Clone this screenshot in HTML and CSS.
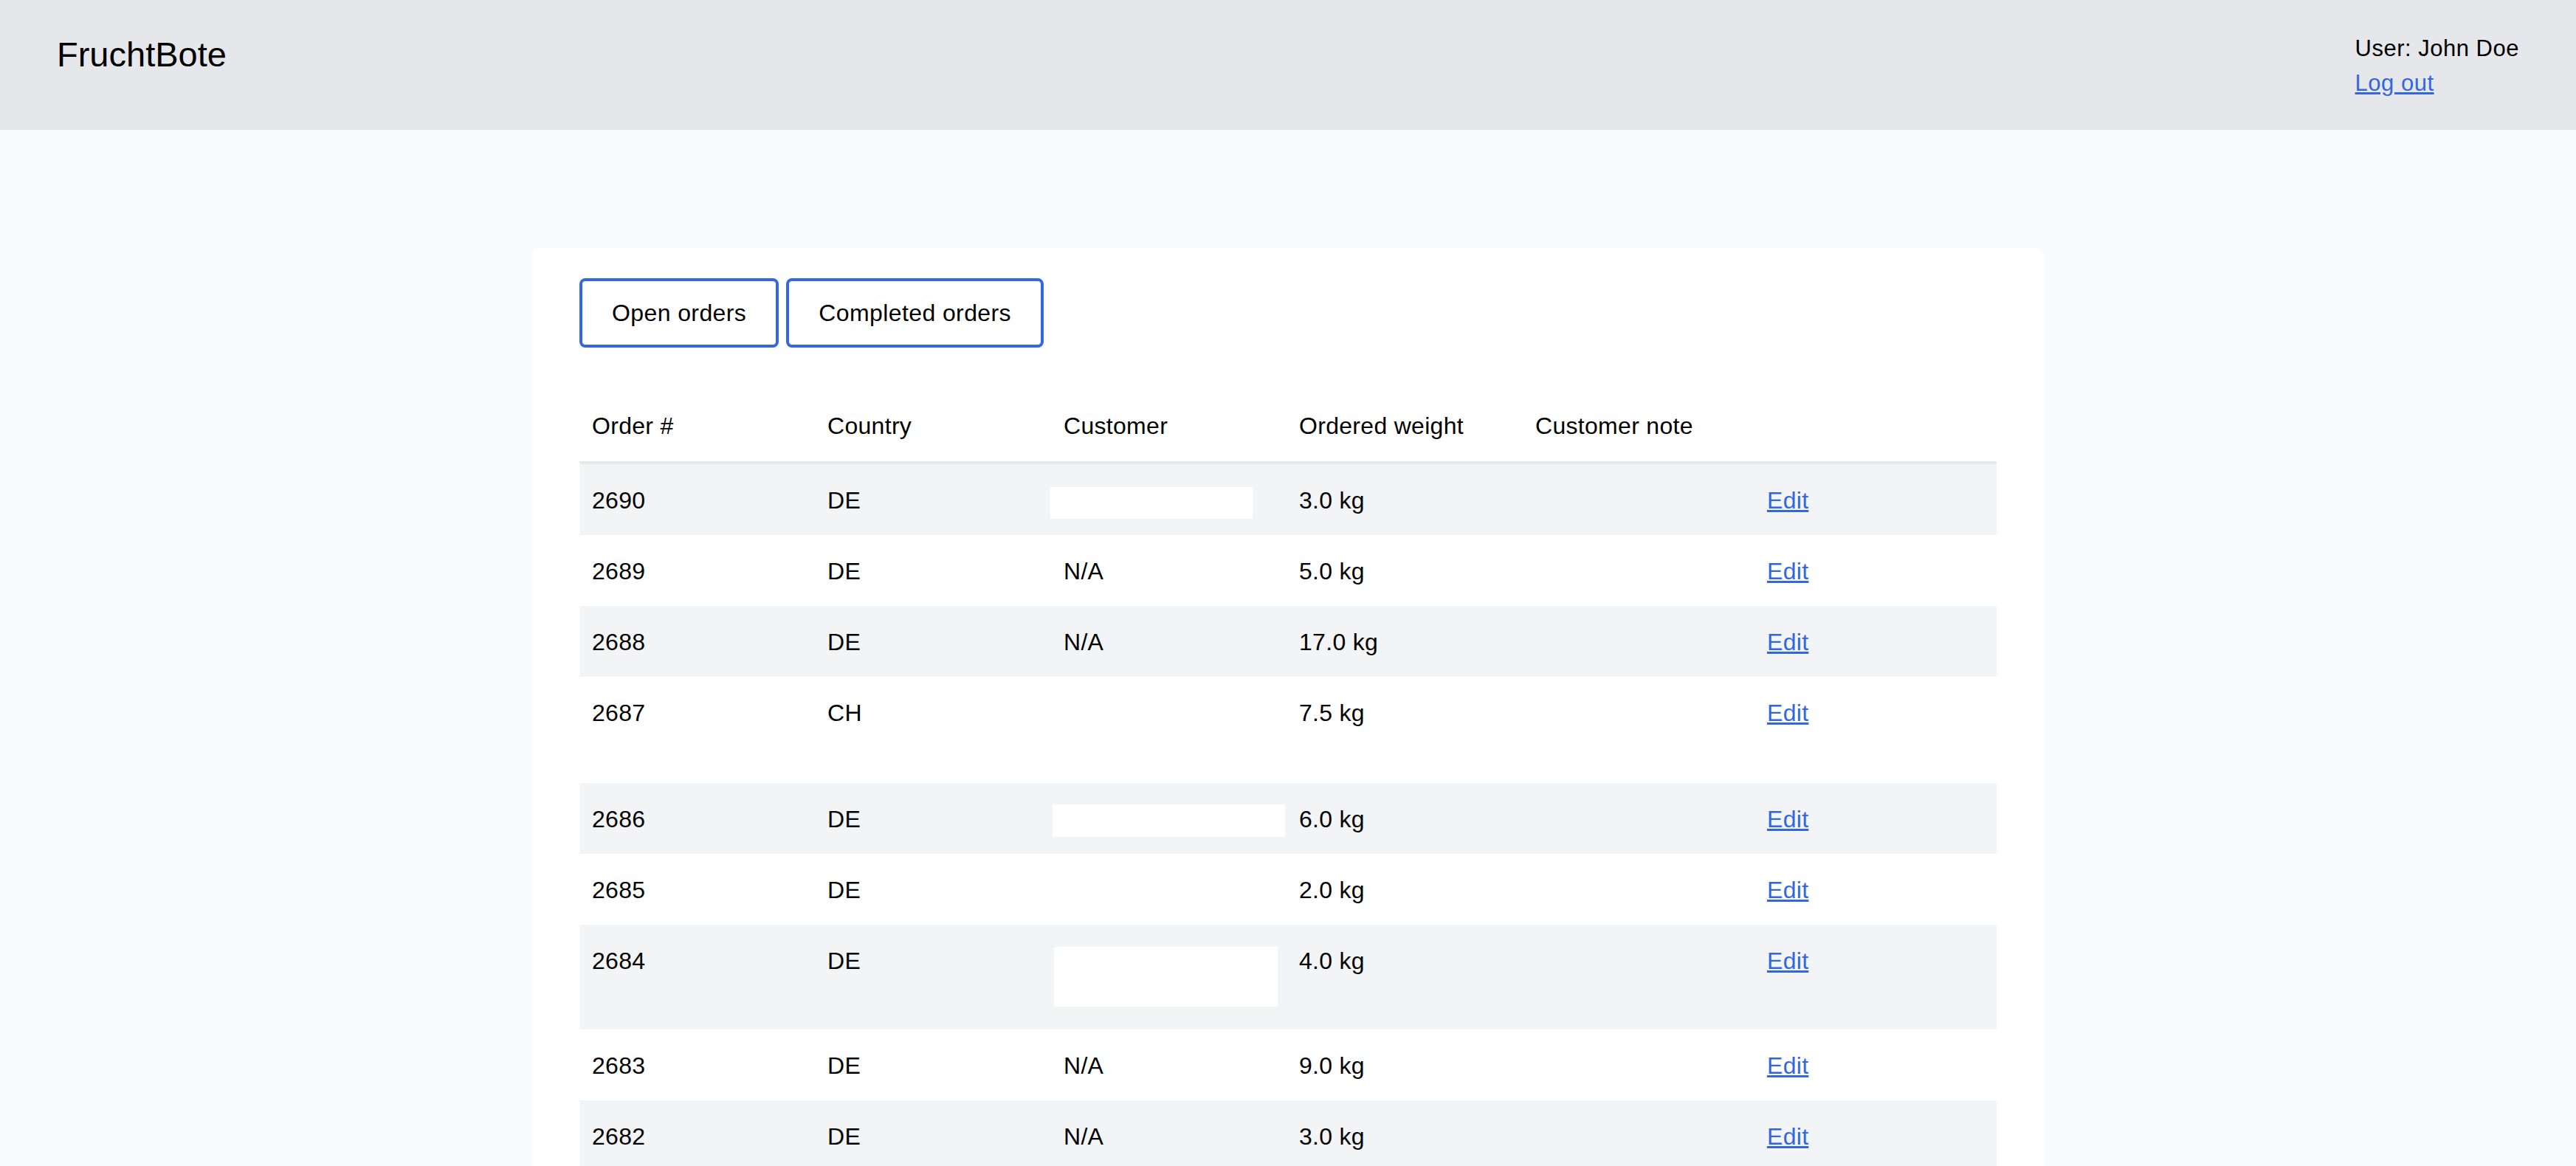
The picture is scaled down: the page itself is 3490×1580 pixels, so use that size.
FILE: index.html
```html
<!DOCTYPE html>
<html lang="en">
<head>
<meta charset="utf-8">
<title>FruchtBote</title>
<link rel="stylesheet" href="styles.css">
</head>
<body>
<header class="topbar">
  <div class="brand">FruchtBote</div>
  <div class="user">
    <div class="user-name">User: John Doe</div>
    <a class="link" href="#">Log out</a>
  </div>
</header>
<main class="page">
  <section class="card">
    <div class="tabs">
      <button class="tab">Open orders</button>
      <button class="tab">Completed orders</button>
    </div>
    <table class="orders">
      <colgroup>
        <col class="c1"><col class="c2"><col class="c3"><col class="c4"><col class="c5"><col class="c6">
      </colgroup>
      <thead>
        <tr><th>Order #</th><th>Country</th><th>Customer</th><th>Ordered weight</th><th>Customer note</th><th class="edit-cell"></th></tr>
      </thead>
      <tbody>
        <tr><td>2690</td><td>DE</td><td><span class="redact r1"></span></td><td>3.0 kg</td><td></td><td class="edit-cell"><a class="link" href="#">Edit</a></td></tr>
        <tr><td>2689</td><td>DE</td><td>N/A</td><td>5.0 kg</td><td></td><td class="edit-cell"><a class="link" href="#">Edit</a></td></tr>
        <tr><td>2688</td><td>DE</td><td>N/A</td><td>17.0 kg</td><td></td><td class="edit-cell"><a class="link" href="#">Edit</a></td></tr>
        <tr><td>2687</td><td>CH</td><td><span class="redact r4"></span></td><td>7.5 kg</td><td></td><td class="edit-cell"><a class="link" href="#">Edit</a></td></tr>
        <tr><td>2686</td><td>DE</td><td><span class="redact r2"></span></td><td>6.0 kg</td><td></td><td class="edit-cell"><a class="link" href="#">Edit</a></td></tr>
        <tr><td>2685</td><td>DE</td><td></td><td>2.0 kg</td><td></td><td class="edit-cell"><a class="link" href="#">Edit</a></td></tr>
        <tr><td>2684</td><td>DE</td><td><span class="redact r3"></span></td><td>4.0 kg</td><td></td><td class="edit-cell"><a class="link" href="#">Edit</a></td></tr>
        <tr><td>2683</td><td>DE</td><td>N/A</td><td>9.0 kg</td><td></td><td class="edit-cell"><a class="link" href="#">Edit</a></td></tr>
        <tr><td>2682</td><td>DE</td><td>N/A</td><td>3.0 kg</td><td></td><td class="edit-cell"><a class="link" href="#">Edit</a></td></tr>
      </tbody>
    </table>
  </section>
</main>
</body>
</html>
```
FILE: styles.css
```css
html, body {
  margin: 0;
  padding: 0;
}

body {
  background: #f9fafb;
  color: #000;
  font-family: "Liberation Sans", Arial, Helvetica, sans-serif;
}

.topbar {
  box-sizing: border-box;
  height: 176px;
  background: #e5e7eb;
  display: flex;
  justify-content: space-between;
  align-items: flex-start;
  padding: 0 77px 0 77px;
}

.brand {
  font-size: 47px;
  line-height: 46px;
  margin-top: 51px;
}

.user {
  margin-top: 42px;
  font-size: 31px;
  line-height: 47px;
  letter-spacing: 0.5px;
}

.user .link {
  display: inline-block;
}

.link {
  color: #3367e0;
  text-decoration: underline;
}

.page {
  display: flex;
  justify-content: center;
  padding-top: 160px;
}

.card {
  box-sizing: border-box;
  width: 2048px;
  background: #fff;
  border-radius: 10px;
  padding: 41px 64px 64px;
}

.tabs {
  display: flex;
  gap: 10px;
}

.tab {
  font-family: inherit;
  font-size: 32px;
  line-height: 46px;
  letter-spacing: 0.4px;
  color: #000;
  background: #fff;
  padding: 20px 40px;
  border: 4px solid #3367e0;
  border-radius: 8px;
  margin: 0;
}

.orders {
  margin-top: 58px;
  width: 1920px;
  table-layout: fixed;
  border-collapse: separate;
  border-spacing: 0;
  font-size: 32px;
  line-height: 46px;
  letter-spacing: 0.3px;
}

.c1 { width: 319px; }
.c2 { width: 320px; }
.c3 { width: 319px; }
.c4 { width: 320px; }
.c5 { width: 314px; }
.c6 { width: 328px; }

.orders th {
  text-align: left;
  font-weight: normal;
  padding: 25px 15px 25px 17px;
  border-bottom: 4px solid #e5e7eb;
  vertical-align: top;
}

.orders td {
  padding: 26px 15px 24px 17px;
  vertical-align: top;
}

.orders tbody tr:nth-child(odd) {
  background: #f3f4f6;
}

.redact {
  display: block;
  background: #fff;
}

.r1 {
  width: 274px;
  height: 43px;
  margin: 5px 0 -2px -18px;
}

.r2 {
  width: 315px;
  height: 44px;
  margin: 3px 0 -1px -15px;
}

.r3 {
  width: 303px;
  height: 81px;
  margin: 4px 0 7px -13px;
}

.r4 {
  width: 303px;
  height: 84px;
  margin: 4px 0 6px -13px;
}
```
